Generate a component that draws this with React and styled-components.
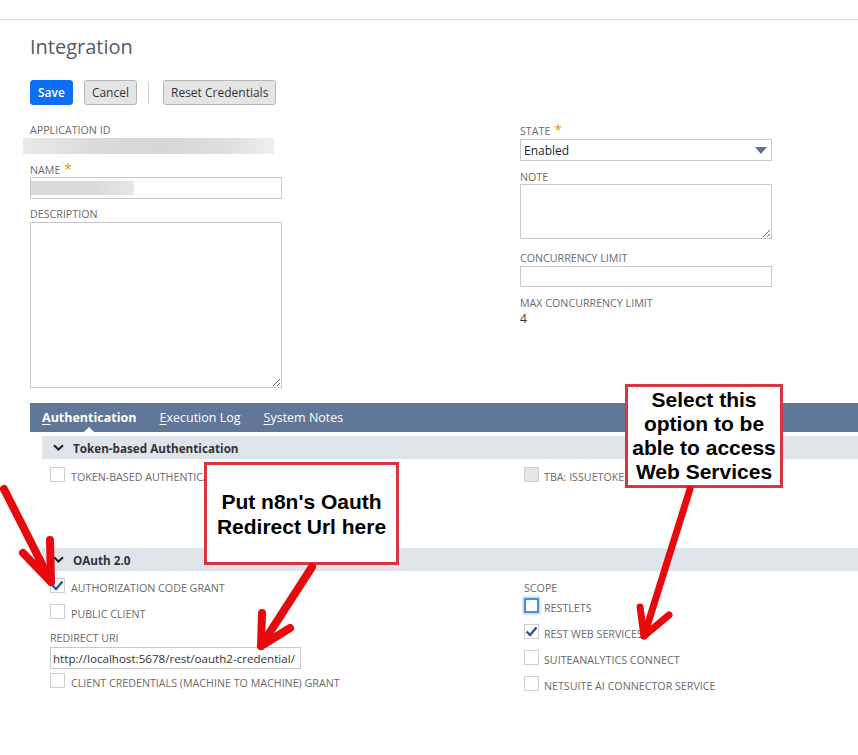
import React from 'react';
import styled, { createGlobalStyle } from 'styled-components';

const GlobalStyle = createGlobalStyle`
  html, body { margin: 0; padding: 0; background: #fff; }
  body { font-family: "Open Sans", "Liberation Sans", sans-serif; color: #333; }
  * { box-sizing: border-box; }
`;

const Page = styled.div`
  position: relative;
  width: 858px;
  height: 755px;
  overflow: hidden;
  background: #fff;
`;

const TopRule = styled.div`
  height: 20px;
  border-bottom: 1px solid #dcdcdc;
`;

const Content = styled.div`
  padding-left: 30px;
`;

const Title = styled.h1`
  margin: 14px 0 0 0;
  height: 26px;
  font-size: 20px;
  line-height: 26px;
  font-weight: 400;
  color: #4f5a6a;
`;

const ButtonBar = styled.div`
  display: flex;
  align-items: center;
  margin-top: 20px;
  height: 25px;
`;

const Button = styled.button`
  height: 25px;
  padding: 0 ${p => (p.$primary ? '7px' : '7px')};
  margin-right: ${p => p.$mr || 0}px;
  border-radius: 3px;
  font-family: "Open Sans", "Liberation Sans", sans-serif;
  font-size: 12px;
  font-weight: ${p => (p.$primary ? 600 : 400)};
  color: ${p => (p.$primary ? '#fff' : '#333')};
  background: ${p => (p.$primary ? '#0b6ff5' : '#e5e5e5')};
  border: 1px solid ${p => (p.$primary ? '#0b6ff5' : '#b5b5b5')};
`;

const Divider = styled.span`
  width: 1px;
  height: 22px;
  background: #cfcfcf;
  margin-right: 14px;
`;

const FormGrid = styled.div`
  display: grid;
  grid-template-columns: 252px 252px;
  column-gap: 238px;
  margin-top: 17px;
  align-items: start;
`;

const Column = styled.div`
  display: flex;
  flex-direction: column;
`;

const Field = styled.div`
  margin-top: ${p => p.$mt || 0}px;
  margin-bottom: ${p => (p.$mb != null ? p.$mb : 8)}px;
`;

const Label = styled.div`
  font-size: 10.7px;
  line-height: 16px;
  height: 16px;
  margin-top: ${p => p.$mt || 0}px;
  color: #6b6b6b;
  text-transform: uppercase;
  white-space: nowrap;
`;

const Star = styled.span`
  color: #e59400;
  font-size: 14px;
  margin-left: 4px;
`;

const BlurBar = styled.div`
  margin-left: -7px;
  width: 251px;
  height: 16px;
  background: linear-gradient(90deg, #e9e9e9 0%, #dadada 30%, #d6d6d6 55%, #dedede 80%, #eeeeee 100%);
  filter: blur(0.6px);
`;

const Input = styled.div`
  width: ${p => p.$w || 252}px;
  height: ${p => p.$h || 22}px;
  margin-top: ${p => p.$mt || 0}px;
  border: 1px solid #c8c8c8;
  background: #fff;
  display: flex;
  align-items: center;
  padding-left: 2px;
  font-size: 11.6px;
  color: #333;
  white-space: nowrap;
  overflow: hidden;
`;

const BlurFill = styled.div`
  width: 103px;
  height: 14px;
  margin-left: -2px;
  background: linear-gradient(90deg, #dadada, #d9d9d9 60%, #e6e6e6);
  filter: blur(0.5px);
`;

const TextArea = styled.textarea`
  display: block;
  width: 252px;
  height: ${p => p.$h}px;
  margin: ${p => p.$mt || 0}px 0 0 0;
  border: 1px solid #c8c8c8;
  background: #fff;
`;

const Select = styled.div`
  width: 252px;
  height: 22px;
  margin-top: 1px;
  border: 1px solid #c8c8c8;
  display: flex;
  align-items: center;
  justify-content: space-between;
  padding: 0 4px 0 3px;
  font-size: 12px;
  color: #262626;
`;

const Value = styled.div`
  font-size: 12px;
  line-height: 16px;
  color: #333;
`;

const TabBar = styled.div`
  margin-top: 15px;
  height: 29px;
  background: #607799;
  display: flex;
  align-items: center;
  padding-left: 12px;
  gap: 23px;
`;

const Tab = styled.div`
  position: relative;
  color: #fff;
  font-size: 12.5px;
  font-weight: ${p => (p.$active ? 700 : 400)};
  line-height: 29px;
  u { text-decoration: underline; text-underline-offset: 2px; }
  ${p =>
    p.$active &&
    `&::after {
      content: "";
      position: absolute;
      left: 50%;
      bottom: 0;
      margin-left: -5px;
      border-left: 5px solid transparent;
      border-right: 5px solid transparent;
      border-bottom: 5px solid #fff;
    }`}
`;

const Section = styled.div`
  margin-left: 12px;
  margin-top: ${p => (p.$first ? 4 : 0)}px;
`;

const SectionHeader = styled.div`
  height: 23px;
  background: #dfe4eb;
  display: flex;
  align-items: center;
  padding-left: 11px;
  gap: 9px;
  font-size: 11.7px;
  font-weight: 700;
  color: #333;
`;

const SectionBody = styled.div`
  display: grid;
  grid-template-columns: 474px 1fr;
  padding: ${p => p.$pt}px 0 0 8px;
  min-height: ${p => p.$minH || 0}px;
  align-items: start;
`;

const CheckRow = styled.div`
  display: flex;
  align-items: flex-start;
  gap: ${p => p.$gap || 6}px;
  margin-bottom: 6px;
`;

const Box = styled.span`
  flex: none;
  width: 15px;
  height: 15px;
  border: ${p => (p.$focus ? '2px solid #4a8fe0' : '1px solid #cfcfcf')};
  background: ${p => (p.$disabled ? '#e6e6e6' : '#fff')};
  box-shadow: ${p => (p.$focus ? '0 0 2px 1px #a9c9f0' : 'none')};
  display: flex;
  align-items: center;
  justify-content: center;
`;

const CheckText = styled.span`
  font-size: 10.7px;
  line-height: 20px;
  color: #6b6b6b;
  text-transform: uppercase;
  white-space: nowrap;
`;

const Callout = styled.div`
  position: absolute;
  left: ${p => p.$x}px;
  top: ${p => p.$y}px;
  width: ${p => p.$w}px;
  height: ${p => p.$h}px;
  background: #fff;
  border: 3px solid #d9353c;
  display: flex;
  align-items: center;
  justify-content: center;
  text-align: center;
  font-family: "Liberation Sans", Arial, sans-serif;
  font-weight: 700;
  font-size: 21px;
  line-height: ${p => p.$lh}px;
  color: #000;
  z-index: 2;
`;

const Overlay = styled.svg`
  position: absolute;
  left: 0;
  top: 0;
  width: 858px;
  height: 755px;
  pointer-events: none;
  z-index: 3;
`;

const Check = () => (
  <svg width="13" height="11" viewBox="0 0 13 11">
    <path d="M1.5 5.5 L5 9 L11.5 1.5" fill="none" stroke="#2c5795" strokeWidth="2.4" strokeLinejoin="miter" />
  </svg>
);

const Chevron = () => (
  <svg width="11" height="7" viewBox="0 0 11 7">
    <path d="M1 1.3 L5.5 5.5 L10 1.3" fill="none" stroke="#222" strokeWidth="2.2" />
  </svg>
);

const Checkbox = ({ checked, disabled, focus, label, gap }) => (
  <CheckRow $gap={gap}>
    <Box $disabled={disabled} $focus={focus}>{checked && <Check />}</Box>
    <CheckText>{label}</CheckText>
  </CheckRow>
);

const Arrow = ({ from, tip, a, b, w = 8 }) => (
  <g stroke="#e8090c" strokeWidth={w} strokeLinecap="round" strokeLinejoin="round" fill="none">
    <line x1={from[0]} y1={from[1]} x2={tip[0]} y2={tip[1]} />
    <polyline points={`${a[0]},${a[1]} ${tip[0]},${tip[1]} ${b[0]},${b[1]}`} />
  </g>
);

export default function App() {
  return (
    <Page>
      <GlobalStyle />
      <TopRule />
      <Content>
        <Title>Integration</Title>
        <ButtonBar>
          <Button $primary $mr={11}>Save</Button>
          <Button $mr={11}>Cancel</Button>
          <Divider />
          <Button>Reset Credentials</Button>
        </ButtonBar>

        <FormGrid>
          <Column>
            <Field $mb={7}>
              <Label>Application ID</Label>
              <BlurBar />
            </Field>
            <Field $mb={7}>
              <Label>Name<Star>*</Star></Label>
              <Input><BlurFill /></Input>
            </Field>
            <Field $mb={0}>
              <Label>Description</Label>
              <TextArea $h={166} />
            </Field>
          </Column>
          <Column>
            <Field>
              <Label>State<Star>*</Star></Label>
              <Select>
                <span>Enabled</span>
                <svg width="12" height="7" viewBox="0 0 12 7"><path d="M0 0 H12 L6 7 Z" fill="#5b7196" /></svg>
              </Select>
            </Field>
            <Field $mb={11}>
              <Label>Note</Label>
              <TextArea $h={55} $mt={-1} />
            </Field>
            <Field>
              <Label>Concurrency Limit</Label>
              <Input $h={21} />
            </Field>
            <Field>
              <Label>Max Concurrency Limit</Label>
              <Value>4</Value>
            </Field>
          </Column>
        </FormGrid>

        <TabBar>
          <Tab $active><u>A</u>uthentication</Tab>
          <Tab><u>E</u>xecution Log</Tab>
          <Tab><u>S</u>ystem Notes</Tab>
        </TabBar>

        <Section $first>
          <SectionHeader><Chevron />Token-based Authentication</SectionHeader>
          <SectionBody $pt={8} $minH={89}>
            <div><Checkbox label="Token-based Authentication" /></div>
            <div><Checkbox disabled label="TBA: IssueToken Endpoint" gap={5} /></div>
          </SectionBody>
        </Section>

        <Section>
          <SectionHeader><Chevron />OAuth 2.0</SectionHeader>
          <SectionBody $pt={7}>
            <div>
              <Checkbox checked label="Authorization Code Grant" />
              <Checkbox label="Public Client" />
              <Field $mb={4} $mt={1}>
                <Label>Redirect URI</Label>
                <Input $w={251} $mt={1}>http://localhost:5678/rest/oauth2-credential/</Input>
              </Field>
              <Checkbox label="Client Credentials (Machine to Machine) Grant" />
            </div>
            <div>
              <Field $mb={2}>
                <Label $mt={2}>Scope</Label>
              </Field>
              <Checkbox focus label="RESTlets" gap={5} />
              <Checkbox checked label="REST Web Services" gap={5} />
              <Checkbox label="SuiteAnalytics Connect" gap={5} />
              <Checkbox label="NetSuite AI Connector Service" gap={5} />
            </div>
          </SectionBody>
        </Section>
      </Content>

      <Callout $x={204} $y={462} $w={195} $h={103} $lh={25}>
        <div>Put n8n's Oauth<br />Redirect Url here</div>
      </Callout>
      <Callout $x={625} $y={384} $w={158} $h={104} $lh={24}>
        <div>Select this<br />option to be<br />able to access<br />Web Services</div>
      </Callout>

      <Overlay viewBox="0 0 858 755">
        <Arrow from={[4, 489]} tip={[51, 582]} a={[50, 540]} b={[23, 553]} />
        <Arrow from={[312, 567]} tip={[261, 646]} a={[262, 613]} b={[290, 628]} />
        <Arrow from={[690, 489]} tip={[644, 636]} a={[640, 607]} b={[669, 615]} w={7} />
      </Overlay>
    </Page>
  );
}
